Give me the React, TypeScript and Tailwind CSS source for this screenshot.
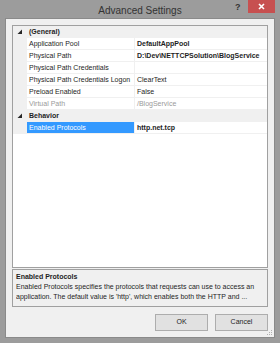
import React from "react";

type Row = {
  kind: "cat" | "prop";
  name: string;
  value?: string;
  bold?: boolean;
  muted?: boolean;
  selected?: boolean;
};

const rows: Row[] = [
  { kind: "cat", name: "(General)" },
  { kind: "prop", name: "Application Pool", value: "DefaultAppPool", bold: true },
  { kind: "prop", name: "Physical Path", value: "D:\\Dev\\NETTCPSolution\\BlogService", bold: true },
  { kind: "prop", name: "Physical Path Credentials", value: "" },
  { kind: "prop", name: "Physical Path Credentials Logon", value: "ClearText" },
  { kind: "prop", name: "Preload Enabled", value: "False" },
  { kind: "prop", name: "Virtual Path", value: "/BlogService", muted: true },
  { kind: "cat", name: "Behavior" },
  { kind: "prop", name: "Enabled Protocols", value: "http.net.tcp", bold: true, selected: true },
];

function Expander() {
  return (
    <svg width="6" height="6" viewBox="0 0 6 6" className="block">
      <polygon points="5,0.5 5,5 0.5,5" fill="#262626" />
    </svg>
  );
}

export default function App() {
  return (
    <div
      className="w-[280px] h-[343px] bg-[#9c9c9c] flex flex-col overflow-hidden text-[#1e1e1e]"
      style={{ fontFamily: '"Liberation Sans", Arial, sans-serif' }}
    >
      {/* title bar */}
      <div className="h-[18px] relative flex items-center justify-center shrink-0">
        <span className="text-[10px] text-[#333] mt-[2px]">Advanced Settings</span>
        <span className="absolute left-[235px] top-[1px] text-[9px] font-bold text-[#333]">?</span>
        <div className="absolute left-[248px] top-0 w-[27px] h-[13px] bg-[#c75050] flex items-center justify-center">
          <svg width="7" height="7" viewBox="0 0 7 7">
            <path d="M1 1 L6 6 M6 1 L1 6" stroke="#fff" strokeWidth="1.6" />
          </svg>
        </div>
      </div>

      {/* client area */}
      <div className="mx-[5px] mb-[6px] flex-1 bg-[#f0f0f0] border border-[#8a8a8a] flex flex-col px-[6px] pt-[6px] pb-[6px] relative">
        {/* property grid */}
        <div className="h-[243px] bg-white border border-[#a0a0a0] shrink-0 text-[7px] leading-[12px]">
          {rows.map((r, i) => (
            <div key={i} className="flex h-[12px]">
              <div className="w-[14px] bg-[#f0f0f0] flex items-center justify-center shrink-0">
                {r.kind === "cat" && <Expander />}
              </div>
              {r.kind === "cat" ? (
                <div className="flex-1 bg-[#f0f0f0] font-bold pl-[2px]">{r.name}</div>
              ) : (
                <>
                  <div
                    className={
                      "w-[108px] shrink-0 pl-[2px] border-b border-r border-[#f0f0f0] whitespace-nowrap overflow-hidden " +
                      (r.selected ? "bg-[#3399ff] text-white" : r.muted ? "text-[#9a9a9a]" : "")
                    }
                  >
                    {r.name}
                  </div>
                  <div
                    className={
                      "flex-1 pl-[2px] border-b border-[#f0f0f0] whitespace-nowrap overflow-hidden " +
                      (r.bold ? "font-bold " : "") +
                      (r.muted ? "text-[#9a9a9a]" : "")
                    }
                  >
                    {r.value}
                  </div>
                </>
              )}
            </div>
          ))}
        </div>

        {/* description */}
        <div className="mt-[1px] h-[38px] border border-[#a0a0a0] bg-[#f0f0f0] px-[3px] pt-[2px] text-[7px] leading-[10px] shrink-0">
          <div className="font-bold">Enabled Protocols</div>
          <div className="whitespace-nowrap overflow-hidden">
            Enabled Protocols specifies the protocols that requests can use to access an
          </div>
          <div className="whitespace-nowrap overflow-hidden">
            application. The default value is 'http', which enables both the HTTP and ...
          </div>
        </div>

        {/* buttons */}
        <div className="mt-[7px] flex justify-end gap-[7px]">
          <button className="w-[53px] h-[17px] bg-[#e1e1e1] border border-[#adadad] text-[7px] text-[#1e1e1e]">
            OK
          </button>
          <button className="w-[53px] h-[17px] bg-[#e1e1e1] border border-[#adadad] text-[7px] text-[#1e1e1e]">
            Cancel
          </button>
        </div>

        <svg width="6" height="6" viewBox="0 0 6 6" className="absolute right-[1px] bottom-[1px]">
          <rect x="4" y="0" width="1" height="1" fill="#b0b0b0" />
          <rect x="2" y="2" width="1" height="1" fill="#b0b0b0" />
          <rect x="4" y="2" width="1" height="1" fill="#b0b0b0" />
          <rect x="0" y="4" width="1" height="1" fill="#b0b0b0" />
          <rect x="2" y="4" width="1" height="1" fill="#b0b0b0" />
          <rect x="4" y="4" width="1" height="1" fill="#b0b0b0" />
        </svg>
      </div>
    </div>
  );
}
